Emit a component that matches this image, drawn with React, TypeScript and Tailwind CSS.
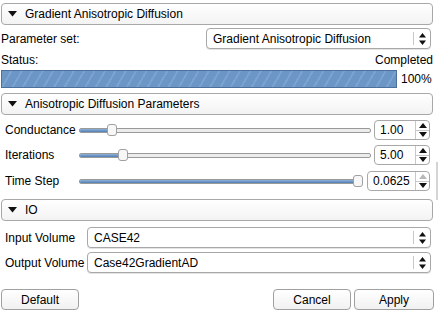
import React from 'react';

const font = { fontFamily: '"Liberation Sans", Arial, sans-serif' };

function Section({ title }: { title: string }) {
    return (
        <div className="flex items-center h-[22px] border border-[#a8a8a8] rounded-[4px] bg-gradient-to-b from-white to-[#f3f3f3]">
            <svg width="9" height="6" viewBox="0 0 9 6" className="ml-[6px] mr-[8px]">
                <path d="M0 0 L9 0 L4.5 5.5 Z" fill="#111" />
            </svg>
            <span className="text-[12px] text-black">{title}</span>
        </div>
    );
}

function UpDown() {
    return (
        <svg width="9" height="14" viewBox="0 0 9 14">
            <path d="M1 5.5 L8 5.5 L4.5 1 Z" fill="#111" />
            <path d="M1 8.5 L8 8.5 L4.5 13 Z" fill="#111" />
        </svg>
    );
}

function Combo({ value, className = '' }: { value: string; className?: string }) {
    return (
        <div className={`flex items-center border border-[#a8a8a8] rounded-[4px] bg-white shadow-[0_1px_0_#e4e4e4] ${className}`}>
            <span className="flex-1 pl-[6px] text-[12px] text-black truncate">{value}</span>
            <div className="w-px h-[13px] bg-[#c8c8c8]" />
            <div className="w-[16px] flex justify-center">
                <UpDown />
            </div>
        </div>
    );
}

function Spin({ value, width, upDisabled = false }: { value: string; width: string; upDisabled?: boolean }) {
    return (
        <div className={`flex h-[20px] border border-[#a8a8a8] rounded-[4px] bg-white ${width}`}>
            <span className="flex-1 pl-[5px] text-[12px] leading-[18px] text-black">{value}</span>
            <div className="w-[14px] border-l border-[#c8c8c8] flex flex-col">
                <div className="flex-1 flex items-center justify-center border-b border-[#c8c8c8]">
                    <svg width="8" height="5" viewBox="0 0 8 5"><path d="M0 5 L8 5 L4 0 Z" fill={upDisabled ? '#b8b8b8' : '#111'} /></svg>
                </div>
                <div className="flex-1 flex items-center justify-center">
                    <svg width="8" height="5" viewBox="0 0 8 5"><path d="M0 0 L8 0 L4 5 Z" fill="#111" /></svg>
                </div>
            </div>
        </div>
    );
}

function Slider({ pct }: { pct: number }) {
    const f = pct / 100;
    return (
        <div className="relative flex-1 h-[12px] flex items-center">
            <div className="w-full h-[5px] rounded-[2px] border border-[#9a9a9a] bg-[#ececec] overflow-hidden">
                <div
                    className="h-full bg-gradient-to-b from-[#8fb1d8] to-[#4f7fb5] border-r border-[#3f6493]"
                    style={{ width: `calc((100% - 10px) * ${f} + 5px)` }}
                />
            </div>
            <div
                className="absolute top-0 w-[10px] h-[12px] rounded-[3px] border border-[#a0a0a0] bg-[radial-gradient(#d8d8d8_0.6px,#f7f7f7_0.6px)] bg-[length:2px_2px]"
                style={{ left: `calc((100% - 10px) * ${f})` }}
            />
        </div>
    );
}

function Button({ label, className = '' }: { label: string; className?: string }) {
    return (
        <div className={`h-[21px] flex items-center justify-center border border-[#a0a0a0] rounded-[4px] bg-gradient-to-b from-white to-[#f1f1f1] text-[12px] text-black ${className}`}>
            {label}
        </div>
    );
}

export default function App() {
    return (
        <div className="relative w-[439px] h-[317px] bg-white overflow-hidden" style={font}>
            <div className="w-[432px] ml-[1px] pt-[3px] flex flex-col">
                {/* Module header */}
                <Section title="Gradient Anisotropic Diffusion" />

                {/* Parameter set */}
                <div className="flex items-center h-[21px] mt-[3px] pr-[2px]">
                    <span className="text-[12px] text-black flex-1">Parameter set:</span>
                    <Combo value="Gradient Anisotropic Diffusion" className="w-[225px] h-[21px]" />
                </div>

                {/* Status */}
                <div className="flex justify-between text-[12px] text-black mt-[3px] h-[16px] leading-[16px]">
                    <span>Status:</span>
                    <span>Completed</span>
                </div>
                <div className="flex items-center mt-[2px] h-[18px]">
                    <div className="w-[396px] h-[18px] border border-[#4b709c] bg-[#6b96c6] bg-[repeating-linear-gradient(-60deg,#6b96c6_0px,#6b96c6_7px,#7aa3d0_7px,#7aa3d0_9px)]" />
                    <span className="ml-[4px] text-[12px] text-black">100%</span>
                </div>

                {/* Anisotropic parameters */}
                <div className="mt-[5px]">
                    <Section title="Anisotropic Diffusion Parameters" />
                </div>
                <div className="flex flex-col mt-[5px] gap-[5px] pr-[3px]">
                    <div className="flex items-center h-[20px]">
                        <span className="w-[78px] pl-[4px] text-[12px] text-black whitespace-nowrap">Conductance</span>
                        <Slider pct={10} />
                        <div className="ml-[3px]"><Spin value="1.00" width="w-[56px]" /></div>
                    </div>
                    <div className="flex items-center h-[20px]">
                        <span className="w-[78px] pl-[4px] text-[12px] text-black whitespace-nowrap">Iterations</span>
                        <Slider pct={14} />
                        <div className="ml-[3px]"><Spin value="5.00" width="w-[56px]" /></div>
                    </div>
                    <div className="flex items-center h-[22px]">
                        <span className="w-[78px] pl-[4px] text-[12px] text-black whitespace-nowrap">Time Step</span>
                        <Slider pct={100} />
                        <div className="ml-[4px]"><Spin value="0.0625" width="w-[63px]" upDisabled /></div>
                    </div>
                </div>

                {/* IO */}
                <div className="mt-[7px]">
                    <Section title="IO" />
                </div>
                <div className="flex flex-col mt-[6px] gap-[4px] pr-[2px]">
                    <div className="flex items-center">
                        <span className="w-[86px] pl-[4px] text-[12px] text-black whitespace-nowrap">Input Volume</span>
                        <Combo value="CASE42" className="flex-1 h-[21px]" />
                    </div>
                    <div className="flex items-center">
                        <span className="w-[86px] pl-[4px] text-[12px] text-black whitespace-nowrap">Output Volume</span>
                        <Combo value="Case42GradientAD" className="flex-1 h-[21px]" />
                    </div>
                </div>

                {/* Buttons */}
                <div className="flex items-center mt-[16px] mr-[-1px]">
                    <Button label="Default" className="w-[78px]" />
                    <div className="flex-1" />
                    <Button label="Cancel" className="w-[78px]" />
                    <Button label="Apply" className="w-[80px] ml-[3px]" />
                </div>
            </div>

            {/* scroll indicator */}
            <div className="absolute left-[436px] top-[162px] w-[2px] h-[38px] bg-[#d4d4d4]" />
        </div>
    );
}
